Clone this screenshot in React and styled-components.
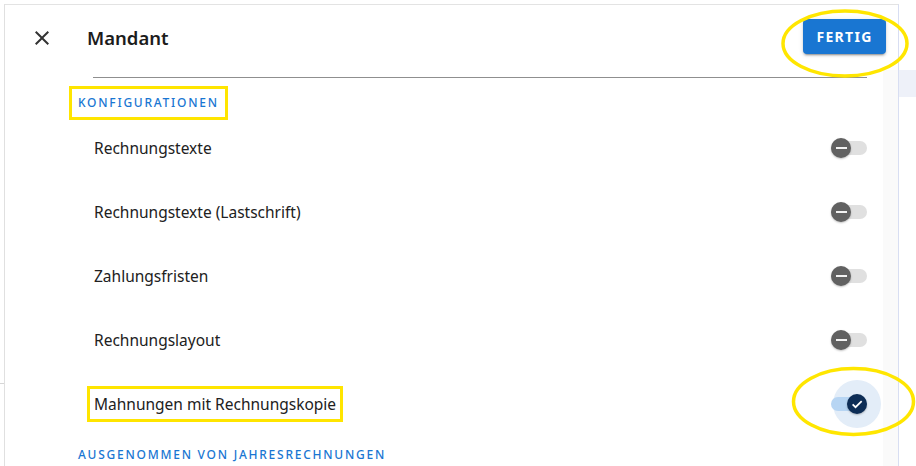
import styled, { createGlobalStyle } from 'styled-components';

const GlobalStyle = createGlobalStyle`
  html, body {
    margin: 0;
    padding: 0;
    background: #ffffff;
  }
  body {
    font-family: "Noto Sans", "Open Sans", Arial, sans-serif;
    color: #212121;
  }
`;

const Page = styled.div`
  position: relative;
  display: flex;
  width: 916px;
  height: 466px;
  overflow: hidden;
`;

const Backdrop = styled.div`
  width: ${props => props.width}px;
  flex-shrink: 0;
  display: flex;
  flex-direction: column;
`;

const BackdropMark = styled.div`
  margin-top: ${props => props.top}px;
  height: ${props => props.height}px;
  background: ${props => props.color};
`;

const Dialog = styled.div`
  width: 893px;
  margin-top: 4px;
  border-top: 1px solid #e3e3e3;
  border-left: 1px solid #e0e0e0;
  border-right: 1px solid #d8def2;
  background: #ffffff;
  display: flex;
  flex-direction: column;
`;

const Header = styled.div`
  height: 65px;
  display: flex;
  align-items: center;
  padding: 0 12px 0 20px;
`;

const CloseButton = styled.button`
  width: 34px;
  height: 34px;
  padding: 0;
  border: none;
  background: transparent;
  display: flex;
  align-items: center;
  justify-content: center;
  color: #333333;
  cursor: pointer;
`;

const Title = styled.h1`
  margin: 0 0 0 28px;
  font-size: 18.5px;
  font-weight: 600;
  color: #1c1c1c;
  flex: 1;
`;

const DoneButton = styled.button`
  height: 35px;
  width: 83px;
  margin-top: -2px;
  border: none;
  border-radius: 4px;
  background: #1976d2;
  color: #ffffff;
  font-family: inherit;
  font-size: 14px;
  font-weight: 700;
  letter-spacing: 1.3px;
  box-shadow: 0 3px 1px -2px rgba(0, 0, 0, 0.2), 0 2px 2px 0 rgba(0, 0, 0, 0.14),
    0 1px 5px 0 rgba(0, 0, 0, 0.12);
  cursor: pointer;
`;

const Body = styled.div`
  flex: 1;
  display: flex;
`;

const Content = styled.div`
  flex: 1;
  padding: 0 16px 0 73px;
  display: flex;
  flex-direction: column;
`;

const ScrollTrack = styled.div`
  width: 15px;
  background: #fafafa;
`;

const Divider = styled.div`
  height: 1px;
  margin: 7px 0 0 15px;
  background: #8f8f8f;
`;

const SectionLabel = styled.div`
  align-self: flex-start;
  margin-top: ${props => props.top}px;
  margin-bottom: ${props => props.bottom || 0}px;
  font-size: 12px;
  line-height: 16px;
  font-weight: 500;
  letter-spacing: 1.75px;
  color: #1976d2;
  outline: ${props => (props.marked ? '3px solid #ffe500' : 'none')};
  outline-offset: 6px;
`;

const Row = styled.div`
  height: 64px;
  display: flex;
  align-items: center;
  justify-content: space-between;
  padding-left: 16px;
`;

const RowLabel = styled.span`
  font-size: 15.5px;
  line-height: 22px;
  color: #212121;
  outline: ${props => (props.marked ? '3px solid #ffe500' : 'none')};
  outline-offset: 4px;
`;

const Switch = styled.div`
  position: relative;
  width: 36px;
  height: 20px;
  display: flex;
  align-items: center;
`;

const Track = styled.div`
  position: relative;
  width: 36px;
  height: 14px;
  border-radius: 7px;
  background: ${props => (props.on ? '#b7d5f3' : '#e0e0e0')};
`;

const Halo = styled.div`
  position: absolute;
  left: 2px;
  top: -14px;
  width: 48px;
  height: 48px;
  border-radius: 50%;
  background: #e3edf8;
`;

const Thumb = styled.div`
  position: absolute;
  top: 0;
  left: ${props => (props.on ? 16 : 0)}px;
  width: 20px;
  height: 20px;
  border-radius: 50%;
  background: ${props => (props.on ? '#0d2d56' : '#616161')};
  box-shadow: 0 1px 2px rgba(0, 0, 0, 0.25);
  display: flex;
  align-items: center;
  justify-content: center;
`;

const Minus = styled.div`
  width: 11px;
  height: 2px;
  background: #f2f2f2;
`;

const Annotations = styled.svg`
  position: absolute;
  left: 0;
  top: 0;
  pointer-events: none;
`;

function Toggle({ on }) {
  return (
    <Switch>
      {on && <Halo />}
      <Track on={on} />
      <Thumb on={on}>
        {on ? (
          <svg width="14" height="14" viewBox="0 0 24 24">
            <path d="M4.5 12.5l5 5L20 7" fill="none" stroke="#ffffff" strokeWidth="3" />
          </svg>
        ) : (
          <Minus />
        )}
      </Thumb>
    </Switch>
  );
}

const rows = [
  { label: 'Rechnungstexte', on: false },
  { label: 'Rechnungstexte (Lastschrift)', on: false },
  { label: 'Zahlungsfristen', on: false },
  { label: 'Rechnungslayout', on: false },
  { label: 'Mahnungen mit Rechnungskopie', on: true, marked: true },
];

export default function App() {
  return (
    <>
      <GlobalStyle />
      <Page>
        <Backdrop width={4}>
          <BackdropMark top={383} height={1} color="#d6d6d6" />
        </Backdrop>
        <Dialog>
          <Header>
            <CloseButton aria-label="close">
              <svg width="24" height="24" viewBox="0 0 24 24">
                <path
                  fill="currentColor"
                  d="M19 6.41 17.59 5 12 10.59 6.41 5 5 6.41 10.59 12 5 17.59 6.41 19 12 13.41 17.59 19 19 17.59 13.41 12z"
                />
              </svg>
            </CloseButton>
            <Title>Mandant</Title>
            <DoneButton>FERTIG</DoneButton>
          </Header>
          <Body>
            <Content>
              <Divider />
              <SectionLabel top={17} bottom={5} marked>
                KONFIGURATIONEN
              </SectionLabel>
              {rows.map(r => (
                <Row key={r.label}>
                  <RowLabel marked={r.marked}>{r.label}</RowLabel>
                  <Toggle on={r.on} />
                </Row>
              ))}
              <SectionLabel top={11}>AUSGENOMMEN VON JAHRESRECHNUNGEN</SectionLabel>
            </Content>
            <ScrollTrack />
          </Body>
        </Dialog>
        <Backdrop width={17}>
          <BackdropMark top={70} height={27} color="#eef1f9" />
        </Backdrop>
        <Annotations width="916" height="466">
          <ellipse cx="845" cy="43.5" rx="62" ry="32.5" fill="none" stroke="#ffe600" strokeWidth="3.5" />
          <ellipse cx="853.5" cy="401.5" rx="60" ry="33" fill="none" stroke="#ffe600" strokeWidth="3.5" />
        </Annotations>
      </Page>
    </>
  );
}
